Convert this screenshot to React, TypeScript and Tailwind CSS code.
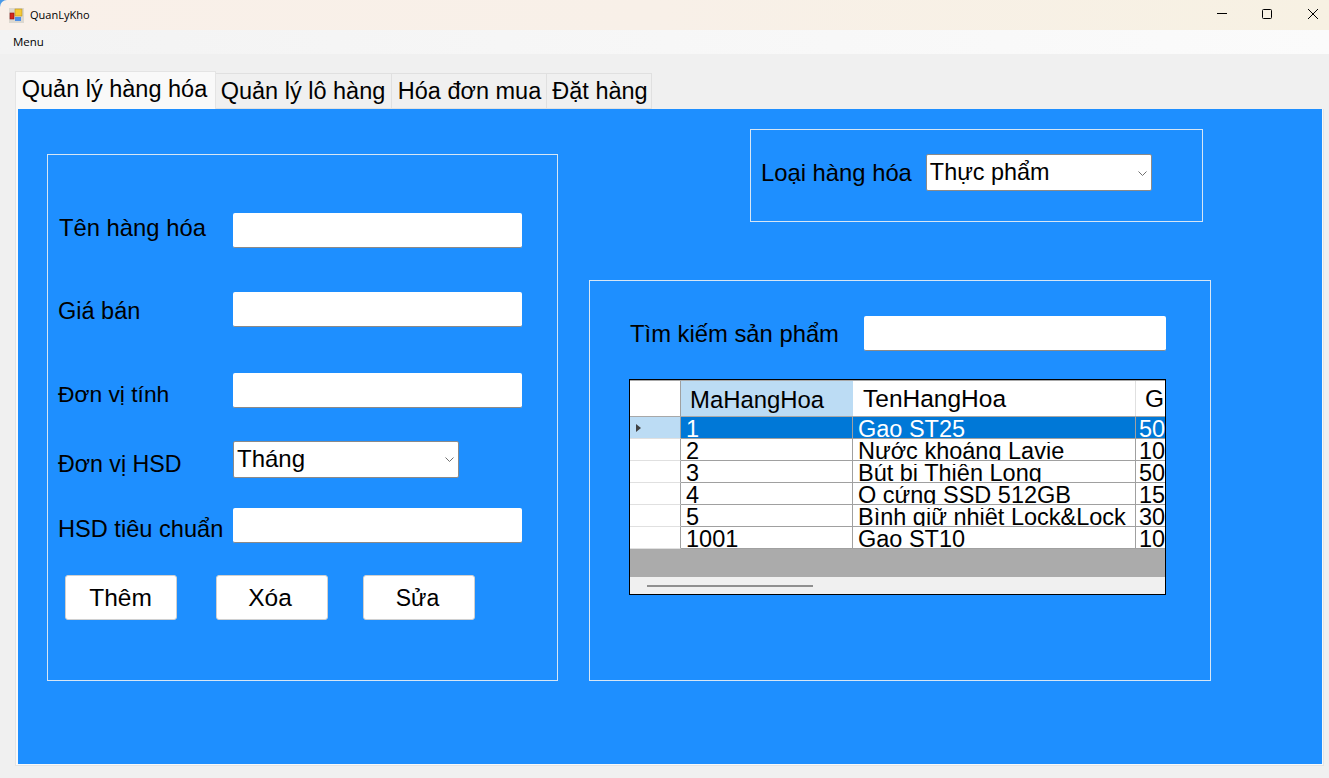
const font = { fontFamily: '"Liberation Sans", Arial, sans-serif' };

const rows = [
  ['1', 'Gạo ST25', '50'],
  ['2', 'Nước khoáng Lavie', '10'],
  ['3', 'Bút bi Thiên Long', '50'],
  ['4', 'Ổ cứng SSD 512GB', '15'],
  ['5', 'Bình giữ nhiệt Lock&Lock', '30'],
  ['1001', 'Gạo ST10', '10'],
];

const Chevron = () => (
  <svg width="9" height="6" viewBox="0 0 9 6" fill="none" stroke="#707070" strokeWidth="1">
    <path d="M0.5 0.5L4.5 4.5L8.5 0.5" />
  </svg>
);

const TextBox = ({ className = 'w-[289px]' }: { className?: string }) => (
  <input className={`h-[35px] rounded-[2px] bg-white border-b border-[#8a8a8a] outline-none ${className}`} />
);

const ComboBox = ({ value, className }: { value: string; className: string }) => (
  <div className={`flex h-[37px] w-[226px] items-center justify-between rounded-[2px] border border-[#8a8a8a] bg-white pl-[3px] pr-[4px] ${className}`}>
    <span className="pb-[1px]">{value}</span>
    <Chevron />
  </div>
);

const ActionButton = ({ label, className = '' }: { label: string; className?: string }) => (
  <button className={`h-[45px] w-[112px] rounded-[3px] border border-[#d0d0d0] bg-white pt-[2px] ${className}`}>{label}</button>
);

// grid cells clip their text like the WinForms grid does, the rows are too short for the font
const CellText = ({ text }: { text: string }) => (
  <div className="mt-[3px] h-[18px] overflow-hidden">
    <div className="-mt-[3px] whitespace-nowrap leading-[24px]">{text}</div>
  </div>
);

const App = () => {
  return (
    <div className="flex h-[778px] w-[1329px] flex-col overflow-hidden bg-[#f0f0f0] text-black" style={font}>
      {/* title bar */}
      <div className="h-[30px] bg-[#4a9ae8]">
        <div className="flex h-[30px] items-center rounded-tl-[7px] bg-gradient-to-r from-[#f9f0e9] via-[#f8f0e8] to-[#f7f1e3] pl-[9px]">
          <svg width="15" height="15" viewBox="0 0 15 15">
            <rect x="0" y="0" width="15" height="15" fill="#dcd8d0" />
            <rect x="6" y="1" width="7" height="7" fill="#f6c936" stroke="#b89020" strokeWidth="0.6" />
            <rect x="1" y="5" width="4" height="6" fill="#d4261c" stroke="#8a1010" strokeWidth="0.6" />
            <rect x="6" y="9" width="6" height="4" fill="#4f8fe6" />
          </svg>
          <span className="ml-[6px] text-[11px]" style={{ fontFamily: '"Open Sans", sans-serif' }}>QuanLyKho</span>
          <div className="ml-auto flex items-center pr-[11px]">
            <svg width="10" height="10" viewBox="0 0 10 10" stroke="#000" strokeWidth="1" fill="none" className="mr-[35px] -translate-y-[1px]">
              <path d="M0 4.5H10" />
            </svg>
            <svg width="10" height="10" viewBox="0 0 10 10" stroke="#000" strokeWidth="1" fill="none" className="mr-[36px] -translate-y-[1px]">
              <rect x="0.5" y="0.5" width="9" height="9" rx="1" />
            </svg>
            <svg width="10" height="10" viewBox="0 0 10 10" stroke="#000" strokeWidth="1" fill="none" className="-translate-y-[1px]">
              <path d="M0 0L10 10M10 0L0 10" />
            </svg>
          </div>
        </div>
      </div>
      {/* menu */}
      <div className="flex h-[24px] items-center bg-gradient-to-r from-[#f3f3f3] to-[#fbfbfb] pl-[13px] text-[11.5px]" style={{ fontFamily: '"Open Sans", sans-serif' }}>Menu</div>

      {/* tabs */}
      <div className="mt-[17px] flex h-[38px] items-end pl-[15px] text-[23.5px] leading-[33px]">
        <div className="flex h-[38px] w-[201px] items-start justify-center border border-b-0 border-[#e4e4e4] bg-[#f9f9f9] pr-[2px] pt-[1px]">Quản lý hàng hóa</div>
        <div className="flex h-[36px] w-[176px] items-center justify-center border border-l-0 border-[#e0e0e0] pr-[1px]">Quản lý lô hàng</div>
        <div className="flex h-[36px] w-[155px] items-center justify-center border border-l-0 border-[#e0e0e0] pl-[1px]">Hóa đơn mua</div>
        <div className="flex h-[36px] w-[105px] items-center justify-center border border-l-0 border-[#e0e0e0] pl-[2px]">Đặt hàng</div>
      </div>

      {/* tab page */}
      <div className="ml-[15px] w-[1309px] border-x border-b border-[#e4e4e4] bg-[#f9f9f9] pb-[1px] pl-[2px]">
        <div className="flex h-[655px] w-[1304px] bg-[#1e8fff]">
          <div className="ml-[29px] mt-[45px] h-[527px] w-[511px] border border-[#d6e6f5] pl-[11px]">
            <div className="mt-[58px] flex h-[35px] items-center">
              <span className="w-[174px] pb-[6px] text-[23.8px]">Tên hàng hóa</span>
              <TextBox />
            </div>
            <div className="mt-[44px] flex h-[35px] items-center">
              <span className="-ml-[1px] w-[175px] pt-[4px] text-[23.5px]">Giá bán</span>
              <TextBox />
            </div>
            <div className="mt-[46px] flex h-[35px] items-center">
              <span className="-ml-[1px] w-[175px] pt-[8px] text-[22.8px]">Đơn vị tính</span>
              <TextBox />
            </div>
            <div className="mt-[33px] flex h-[37px] items-center">
              <span className="-ml-[1px] w-[175px] pt-[10px] text-[23.2px]">Đơn vị HSD</span>
              <ComboBox value="Tháng" className="text-[24px]" />
            </div>
            <div className="mt-[30px] flex h-[35px] items-center">
              <span className="-ml-[1px] w-[175px] pt-[8px] text-[23.6px] whitespace-nowrap">HSD tiêu chuẩn</span>
              <TextBox />
            </div>
            <div className="mt-[32px] flex pl-[6px] text-[24.5px]">
              <ActionButton label="Thêm" className="pr-[1px]" />
              <ActionButton label="Xóa" className="ml-[39px] pr-[4px]" />
              <ActionButton label="Sửa" className="ml-[35px] pr-[3px] text-[23px]" />
            </div>
          </div>

          <div className="ml-[31px] flex flex-col">
            <div className="ml-[161px] mt-[20px] flex h-[93px] w-[453px] items-start border border-[#d6e6f5] pl-[10px] pt-[24px]">
              <span className="mr-[14px] mt-[1px] text-[23.8px] whitespace-nowrap">Loại hàng hóa</span>
              <ComboBox value="Thực phẩm" className="pt-[2px] text-[23.4px]" />
            </div>
            <div className="mt-[58px] h-[401px] w-[622px] border border-[#d6e6f5] pl-[40px]">
              <div className="mt-[35px] flex h-[35px] items-center">
                <span className="w-[234px] text-[23.8px] whitespace-nowrap">Tìm kiếm sản phẩm</span>
                <TextBox className="w-[302px]" />
              </div>
              {/* data grid */}
              <div className="-ml-[1px] mt-[28px] flex h-[216px] w-[537px] flex-col overflow-hidden border border-black bg-[#ababab]">
                <div className="flex h-[37px] shrink-0 border-y border-[#a8a8a8] bg-white">
                  <div className="w-[51px] border-r border-[#a0a0a0]" />
                  <div className="flex w-[172px] items-center bg-[#bcdcf4] pl-[9px] pt-[2px] text-[23.9px]">MaHangHoa</div>
                  <div className="flex w-[283px] items-center border-r border-[#e0e0e0] pl-[10px] pt-[2px] text-[24.5px]">TenHangHoa</div>
                  <div className="flex flex-1 items-center overflow-hidden whitespace-nowrap pl-[9px] pt-[2px] text-[24.5px]">GiaBan</div>
                </div>
                {rows.map((r, i) => {
                  const selected = i === 0;
                  return (
                    <div key={r[0]} className={`flex h-[22px] shrink-0 overflow-hidden text-[23.5px] ${selected ? 'bg-[#0078d7] text-white' : 'bg-white'}`}>
                      <div className={`flex w-[51px] shrink-0 items-center border-b border-r border-r-[#a0a0a0] border-b-[#e0e0e0] pl-[6px] ${selected ? 'bg-[#bcdcf4]' : 'bg-white'}`}>
                        {selected && <div className="h-0 w-0 border-y-[4px] border-l-[5px] border-y-transparent border-l-[#404040]" />}
                      </div>
                      <div className="w-[172px] shrink-0 border-b border-r border-[#a0a0a0] pl-[5px]"><CellText text={r[0]} /></div>
                      <div className="w-[283px] shrink-0 border-b border-r border-[#a0a0a0] pl-[5px]"><CellText text={r[1]} /></div>
                      <div className="flex-1 overflow-hidden border-b border-[#a0a0a0] pl-[3px]"><CellText text={r[2]} /></div>
                    </div>
                  );
                })}
                <div className="flex-1" />
                <div className="flex h-[17px] shrink-0 items-center bg-[#f0f0f0] pl-[17px]">
                  <div className="h-[2px] w-[166px] bg-[#8f8f8f]" />
                </div>
              </div>
            </div>
          </div>
        </div>
      </div>
    </div>
  );
};

export default App;
